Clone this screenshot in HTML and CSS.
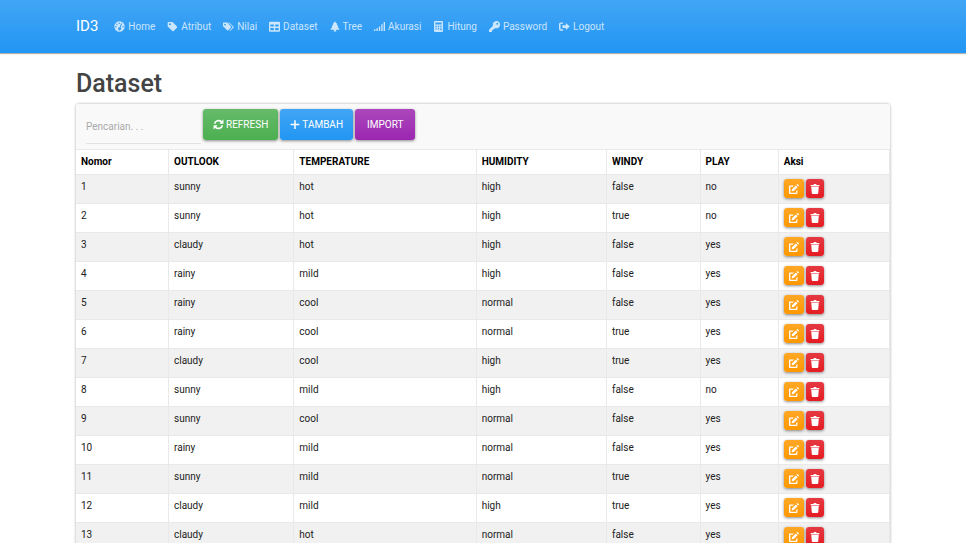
FILE: index.html
```html
<!DOCTYPE html>
<html lang="id">
<head>
    <meta charset="UTF-8">
    <meta name="viewport" content="width=device-width, initial-scale=1.0">
    <title>Dataset - ID3</title>
    <link rel="stylesheet" href="styles.css">
</head>
<body>
<svg class="sprite" aria-hidden="true">
    <symbol id="i-home" viewBox="0 0 16 16"><path fill-rule="evenodd" d="M8 .5a7.500 7.500 0 1 0 0 15 7.500 7.500 0 0 0 0-15zM8 2a1.100 1.100 0 1 1 0 2.200 1.100 1.100 0 0 1 0-2.200zM4.300 3.700a1.100 1.100 0 1 1 0 2.200 1.100 1.100 0 0 1 0-2.200zM2.800 7.300a1.100 1.100 0 1 1 0 2.200 1.100 1.100 0 0 1 0-2.200zM13.200 7.300a1.100 1.100 0 1 1 0 2.200 1.100 1.100 0 0 1 0-2.200zM10.500 3.300l1.300.6L9.600 9.600a2.200 2.200 0 1 1-1.400-.5z"/></symbol>
    <symbol id="i-tag" viewBox="0 0 16 16"><path fill-rule="evenodd" d="M1 2.500Q1 1.500 2 1.500h5.500q.6 0 1 .4l6 6q.9.9 0 1.800l-4.800 4.800q-.9.9-1.800 0l-6.500-6.300q-.4-.4-.4-1zM4.300 3.300a1.500 1.500 0 1 0 0 3 1.500 1.500 0 0 0 0-3z"/></symbol>
    <symbol id="i-tags" viewBox="0 0 18 16"><path fill-rule="evenodd" d="M0 2.500Q0 1.500 1 1.500h5.500q.6 0 1 .4l5.500 6q.9.9 0 1.800l-4.300 4.600q-.9.9-1.800 0L.4 8.200Q0 7.800 0 7.200zM3.300 3.300a1.500 1.500 0 1 0 0 3 1.500 1.500 0 0 0 0-3z"/><path d="M8.400 1.500h1.200q.6 0 1 .4l6.500 6.300q.9.900 0 1.800L12.500 14.400q-.9.9-1.800.2l4.300-4.600q1.100-1.200.1-2.300z"/></symbol>
    <symbol id="i-table" viewBox="0 0 16 16"><path fill-rule="evenodd" d="M1.500 1h13Q16 1 16 2.500v11.500q0 1.500-1.500 1.500h-13Q0 15.500 0 14V2.500Q0 1 1.500 1zM2 5v3h5V5zM9 5v3h5V5zM2 10v3.500h5V10zM9 10v3.500h5V10z"/></symbol>
    <symbol id="i-tree" viewBox="0 0 16 16"><path d="M8 0l4 4.500h-1.300L13.500 8.200h-1.300L15.600 13H9.300l1 3H5.700l1-3H.4L3.800 8.200H2.500L5.300 4.500H4z"/></symbol>
    <symbol id="i-signal" viewBox="0 0 20 16"><path d="M0 13h2.500v3H0zM4.400 11h2.500v5H4.400zM8.800 8h2.500v8H8.800zM13.200 4h2.500v12h-2.500zM17.500 0H20v16h-2.500z"/></symbol>
    <symbol id="i-calc" viewBox="0 0 16 16"><path fill-rule="evenodd" d="M3 0h10q1.500 0 1.500 1.500v13Q14.500 16 13 16H3q-1.500 0-1.500-1.500v-13Q1.500 0 3 0zM3.500 2v3h9V2zM3.500 7v2h2V7zM7 7v2h2V7zM10.500 7v2h2V7zM3.500 10.500v2h2v-2zM7 10.500v2h2v-2zM10.500 10.500v3h2v-3z"/></symbol>
    <symbol id="i-key" viewBox="0 0 16 16"><path fill-rule="evenodd" d="M10.700 0a5.300 5.300 0 1 1-1.600 10.300L7.900 11.500H6.200v2H4.200V16H0v-3.300l5.800-5.800A5.300 5.300 0 0 1 10.700 0zM12 2.500a1.500 1.500 0 1 0 0 3 1.500 1.500 0 0 0 0-3z"/></symbol>
    <symbol id="i-logout" viewBox="0 0 16 16"><path d="M6 2v2H3q-.8 0-.8.8v6.400q0 .8.8.8h3v2H2.500Q0 14 0 11.500v-7Q0 2 2.500 2z"/><path d="M10 2.800L15.700 8 10 13.200V10H5V6h5z"/></symbol>
    <symbol id="i-refresh" viewBox="0 0 16 16"><path d="M1.200 7A7 7 0 0 1 13 3l2.200-2.200v6H9.300l2-2A4.700 4.700 0 0 0 3.600 7zM14.800 9A7 7 0 0 1 3 13L.8 15.200v-6h5.900l-2 2A4.700 4.700 0 0 0 12.400 9z"/></symbol>
    <symbol id="i-plus" viewBox="0 0 16 16"><path d="M6.800 1h2.400v5.800H15v2.400H9.200V15H6.800V9.200H1V6.800h5.800z"/></symbol>
    <symbol id="i-edit" viewBox="0 0 16 16"><path d="M1.500 2.500h6.300L6 4.500H2.200v9.300h9.300V11l2-2v5.300q0 1.500-1.500 1.500H1.500Q0 15.800 0 14.300V4q0-1.500 1.500-1.500z"/><path d="M11 2.200l2.800 2.800-6.300 6.300-3.200.4.400-3.200zM11.900 1.300l.9-.9q.6-.6 1.200 0l1.600 1.600q.6.600 0 1.200l-.9.900z"/></symbol>
    <symbol id="i-trash" viewBox="0 0 16 16"><path d="M1 1.500h4.500L6.200 0h3.600l.7 1.500H15v2H1zM2 4.500h12l-.8 10q-.1 1.500-1.500 1.500H4.300q-1.400 0-1.500-1.500z"/></symbol>
</svg>

<nav class="navbar">
    <div class="container">
        <a class="brand" href="#">ID3</a>
        <ul class="menu">
            <li><a href="#"><svg class="icon"><use href="#i-home"/></svg>Home</a></li>
            <li><a href="#"><svg class="icon"><use href="#i-tag"/></svg>Atribut</a></li>
            <li><a href="#"><svg class="icon"><use href="#i-tags"/></svg>Nilai</a></li>
            <li><a href="#"><svg class="icon"><use href="#i-table"/></svg>Dataset</a></li>
            <li><a href="#"><svg class="icon icon-narrow"><use href="#i-tree"/></svg>Tree</a></li>
            <li><a href="#"><svg class="icon"><use href="#i-signal"/></svg>Akurasi</a></li>
            <li><a href="#"><svg class="icon"><use href="#i-calc"/></svg>Hitung</a></li>
            <li><a href="#"><svg class="icon"><use href="#i-key"/></svg>Password</a></li>
            <li><a href="#"><svg class="icon"><use href="#i-logout"/></svg>Logout</a></li>
        </ul>
    </div>
</nav>

<main class="container">
    <h1>Dataset</h1>
    <div class="card">
        <form class="toolbar" onsubmit="return false">
            <input class="search" type="text" placeholder="Pencarian. . ." aria-label="Pencarian">
            <div class="buttons">
                <button class="btn btn-success"><svg class="icon"><use href="#i-refresh"/></svg>REFRESH</button>
                <button class="btn btn-primary" type="button"><svg class="icon icon-narrow"><use href="#i-plus"/></svg>TAMBAH</button>
                <button class="btn btn-import" type="button">IMPORT</button>
            </div>
        </form>
        <table>
            <colgroup>
                <col class="c-nomor">
                <col class="c-outlook">
                <col class="c-temp">
                <col class="c-humidity">
                <col class="c-windy">
                <col class="c-play">
                <col>
            </colgroup>
            <thead>
                <tr>
                    <th>Nomor</th>
                    <th>OUTLOOK</th>
                    <th>TEMPERATURE</th>
                    <th>HUMIDITY</th>
                    <th>WINDY</th>
                    <th>PLAY</th>
                    <th>Aksi</th>
                </tr>
            </thead>
            <tbody id="rows"></tbody>
        </table>
    </div>
</main>
<script>
const data = [
    ['sunny', 'hot', 'high', 'false', 'no'],
    ['sunny', 'hot', 'high', 'true', 'no'],
    ['claudy', 'hot', 'high', 'false', 'yes'],
    ['rainy', 'mild', 'high', 'false', 'yes'],
    ['rainy', 'cool', 'normal', 'false', 'yes'],
    ['rainy', 'cool', 'normal', 'true', 'yes'],
    ['claudy', 'cool', 'high', 'true', 'yes'],
    ['sunny', 'mild', 'high', 'false', 'no'],
    ['sunny', 'cool', 'normal', 'false', 'yes'],
    ['rainy', 'mild', 'normal', 'false', 'yes'],
    ['sunny', 'mild', 'normal', 'true', 'yes'],
    ['claudy', 'mild', 'high', 'true', 'yes'],
    ['claudy', 'hot', 'normal', 'false', 'yes']
];

document.getElementById('rows').innerHTML = data.map((row, i) => `<tr>
    <td>${i + 1}</td>${row.map(v => `<td>${v}</td>`).join('')}
    <td><div class="action-list">
        <button class="btn-sm btn-edit" aria-label="Ubah ${i + 1}"><svg class="icon"><use href="#i-edit"/></svg></button>
        <button class="btn-sm btn-delete" aria-label="Hapus ${i + 1}"><svg class="icon"><use href="#i-trash"/></svg></button>
    </div></td>
</tr>`).join('');
</script>
</body>
</html>
```
FILE: styles.css
```css
* {
    box-sizing: border-box;
}

html {
    scrollbar-width: none;
}

body {
    margin: 0;
    background: #fff;
    color: #212121;
    font-family: Roboto, 'Liberation Sans', sans-serif;
    font-size: 10px;
    line-height: 16px;
}

.sprite {
    display: none;
}

.icon {
    width: 11px;
    height: 11px;
    fill: currentColor;
    flex: none;
}

.icon-narrow {
    width: 10px;
}

.container {
    width: 100%;
    max-width: 814px;
    margin: 0 auto;
}

/* Top navigation */
.navbar {
    background: linear-gradient(to bottom, #42a5f5, #2196f3);
    padding: 16px 0;
    box-shadow: 0 1px 1px rgba(0, 0, 0, 0.3);
}

.navbar .container {
    display: flex;
    align-items: center;
    gap: 16px;
}

.navbar a {
    text-decoration: none;
    color: rgba(255, 255, 255, 0.75);
}

.navbar .brand {
    color: #fff;
    font-size: 15px;
    line-height: 21px;
}

.menu {
    display: flex;
    gap: 12px;
    margin: 0;
    padding: 0;
    list-style: none;
}

.menu a {
    display: flex;
    align-items: center;
    gap: 3px;
}

h1 {
    margin: 17px 0 6px;
    font-size: 25px;
    line-height: 28px;
    font-weight: 500;
    color: #444;
}

.card {
    border-radius: 3px;
    overflow: hidden;
    box-shadow: 0 0 3px rgba(0, 0, 0, 0.35);
}

/* Search box and buttons */
.toolbar {
    display: flex;
    align-items: flex-start;
    gap: 2px;
    padding: 5px 10px;
    background: #f9f9f9;
}

.search {
    width: 115px;
    height: 35px;
    padding: 0;
    border: 0;
    border-bottom: 1px solid #e2e2e2;
    background: transparent;
    font: inherit;
    outline: none;
}

.search::placeholder {
    color: #aaa;
}

.buttons {
    display: flex;
    gap: 2px;
}

button {
    border: 0;
    color: #fff;
    font: inherit;
    cursor: pointer;
    border-radius: 3px;
    box-shadow: 0 1px 3px rgba(0, 0, 0, 0.45);
}

.btn {
    display: flex;
    align-items: center;
    gap: 2px;
    height: 31px;
    padding: 0 10px;
}

.btn-success {
    background: linear-gradient(to bottom, #66bb6a, #4caf50);
}

.btn-primary {
    background: linear-gradient(to bottom, #42a5f5, #2196f3);
}

.btn-import {
    padding: 0 12px;
    background: linear-gradient(to bottom, #ab47bc, #9c27b0);
}

/* Data table */
table {
    width: 100%;
    table-layout: fixed;
    border-collapse: separate;
    border-spacing: 0;
    background: #fff;
}

.c-nomor { width: 93px; }
.c-outlook { width: 15.4%; }
.c-temp { width: 22.4%; }
.c-humidity { width: 16%; }
.c-windy { width: 11.5%; }
.c-play { width: 9.6%; }

th, td {
    padding: 4px 5px;
    border-top: 1px solid #e9e9e9;
    border-right: 1px solid #e9e9e9;
    text-align: left;
    vertical-align: top;
}

td {
    padding-bottom: 5px;
}

th {
    color: #000;
    font-weight: 700;
}

tbody tr:nth-child(odd) {
    background: #f1f1f1;
}

.action-list {
    display: flex;
    gap: 2px;
}

.btn-sm {
    display: flex;
    align-items: center;
    justify-content: center;
    width: 18px;
    height: 19px;
    padding: 0;
}

.btn-edit {
    width: 20px;
    background: linear-gradient(to bottom, #ffa726, #ff9800);
}

.btn-delete {
    background: linear-gradient(to bottom, #e53942, #e51c23);
}

.btn-sm .icon {
    width: 10px;
    height: 10px;
}
```
